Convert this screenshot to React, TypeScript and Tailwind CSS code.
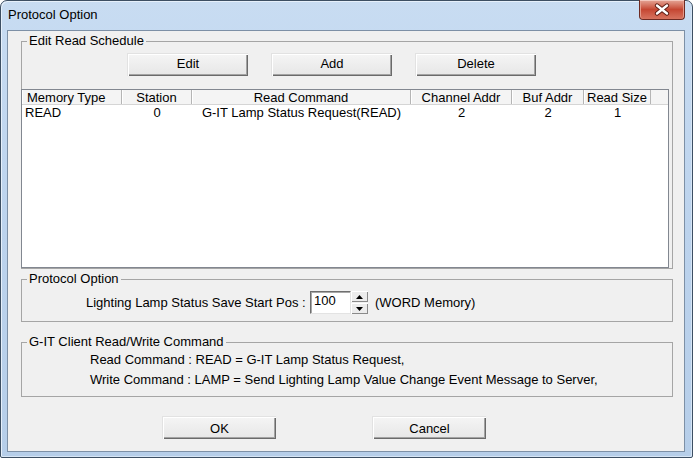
import React from 'react';

const cols = [
  { title: 'Memory Type', w: 'w-[100px]', head: 'justify-start pl-[5px]', cell: 'justify-start pl-[3px]', value: 'READ' },
  { title: 'Station', w: 'w-[70px]', head: 'justify-center', cell: 'justify-center', value: '0' },
  { title: 'Read Command', w: 'w-[219px]', head: 'justify-center', cell: 'justify-center', value: 'G-IT Lamp Status Request(READ)' },
  { title: 'Channel Addr', w: 'w-[101px]', head: 'justify-center', cell: 'justify-center', value: '2' },
  { title: 'Buf Addr', w: 'w-[72px]', head: 'justify-center', cell: 'justify-center', value: '2' },
  { title: 'Read Size', w: 'w-[67px]', head: 'justify-center', cell: 'justify-center', value: '1' },
];

// classic raised push button
function WinButton({ label, className }: { label: string; className: string }) {
  return (
    <button
      type="button"
      className={`${className} h-[23px] flex items-center justify-center bg-linear-to-b from-[#f5f5f5] to-[#e6e6e6] border-t border-l border-[#e2e2e2] shadow-[inset_1px_1px_0_#ffffff,inset_-1px_-1px_0_#6a6a6a,inset_-2px_-2px_0_#a3a3a3] text-[13px] leading-[15px] text-black`}
    >
      {label}
    </button>
  );
}

function SpinArrow({ up }: { up: boolean }) {
  return (
    <div className="flex-1 flex items-center justify-center bg-[#ececec] shadow-[inset_1px_1px_0_#ffffff,inset_-1px_-1px_0_#8a8a8a]">
      <svg width="7" height="4" viewBox="0 0 7 4">
        {up ? <path d="M3.5 0 L7 4 L0 4 Z" fill="#000" /> : <path d="M0 0 L7 0 L3.5 4 Z" fill="#000" />}
      </svg>
    </div>
  );
}

function CloseButton() {
  return (
    <div className="absolute right-0 -top-px w-[46px] h-[20px] rounded-b-[4px] border border-[#6e2a22] border-t-0 bg-linear-to-b from-[#e4a597] via-[#c54632] to-[#d7735f] shadow-[inset_0_1px_0_#f3c7bd,inset_1px_0_0_#e59a8a,inset_-1px_0_0_#e59a8a] flex items-center justify-center">
      <svg width="16" height="13" viewBox="0 0 16 13">
        <path d="M3 2.5 L13 10.5 M13 2.5 L3 10.5" stroke="#5a1a12" strokeWidth="4.2" strokeLinecap="round" />
        <path d="M3 2.5 L13 10.5 M13 2.5 L3 10.5" stroke="#ffffff" strokeWidth="2.4" strokeLinecap="round" />
      </svg>
    </div>
  );
}

export default function App() {
  return (
    <div className="w-[693px] h-[458px] bg-white font-['Liberation_Sans',Arial,sans-serif] text-black">
      <div className="w-full h-full flex flex-col rounded-t-[7px] rounded-b-[2px] border border-[#3d4f63] bg-linear-to-b from-[#c8dcf2] via-[#bcd3ed] to-[#b6cee9] pl-[6px] pr-[7px] shadow-[inset_1px_1px_0_#e6f0fb,inset_-1px_-1px_0_#d6e5f5]">
        {/* title bar */}
        <div className="relative h-[29px] shrink-0">
          <div className="pl-[1px] pt-[6px] text-[13px] leading-[15px]">Protocol Option</div>
          <CloseButton />
        </div>

        {/* client area */}
        <div className="h-[422px] shrink-0 border border-[#7d90a6] bg-[#f0f0f0] flex flex-col">
          <fieldset className="mt-[3px] ml-[13px] w-[652px] border border-[#a5a5a5] p-0 min-w-0">
            <legend className="ml-[5px] px-[2px] text-[13px] leading-[14px]">Edit Read Schedule</legend>
            <div className="mt-[5px] pl-[105px] flex gap-[23px]">
              <WinButton label="Edit" className="w-[121px] pb-[3px]" />
              <WinButton label="Add" className="w-[121px] pb-[3px]" />
              <WinButton label="Delete" className="w-[121px] pb-[3px]" />
            </div>
            <div className="mt-[13px] -ml-px w-[648px] h-[179px] border border-[#828790] bg-white flex flex-col">
              <div className="h-[15px] flex bg-[#f4f4f4] border-b border-[#d5d5d5]">
                {cols.map((c) => (
                  <div
                    key={c.title}
                    className={`${c.w} ${c.head} flex items-center border-r border-[#b5b5b5] text-[13px] leading-[15px] whitespace-nowrap shadow-[inset_1px_0_0_#ffffff]`}
                  >
                    {c.title}
                  </div>
                ))}
                <div className="flex-1" />
              </div>
              <div className="h-[15px] flex">
                {cols.map((c) => (
                  <div key={c.title} className={`${c.w} ${c.cell} flex items-center text-[13px] leading-[15px] whitespace-nowrap`}>
                    {c.value}
                  </div>
                ))}
              </div>
            </div>
          </fieldset>

          <fieldset className="mt-[3px] ml-[13px] w-[652px] border border-[#a5a5a5] p-0 min-w-0">
            <legend className="ml-[5px] px-[2px] text-[13px] leading-[14px]">Protocol Option</legend>
            <div className="mt-[5px] mb-[7px] h-[23px] pl-[64px] flex items-center">
              <div className="w-[224px] text-[13px] leading-[15px] whitespace-nowrap">Lighting Lamp Status Save Start Pos :</div>
              <div className="w-[41px] h-[23px] bg-white border border-t-[#6f6f6f] border-l-[#6f6f6f] border-r-[#e3e3e3] border-b-[#e3e3e3] shadow-[inset_1px_1px_0_#a8a8a8] text-[13px] leading-[15px] pl-[3px] pt-[1px]">
                100
              </div>
              <div className="w-[17px] h-[23px] flex flex-col gap-px">
                <SpinArrow up />
                <SpinArrow up={false} />
              </div>
              <div className="ml-[7px] text-[13px] leading-[15px]">(WORD Memory)</div>
            </div>
          </fieldset>

          <fieldset className="mt-[13px] ml-[13px] w-[652px] border border-[#a5a5a5] p-0 min-w-0">
            <legend className="ml-[5px] px-[2px] text-[13px] leading-[14px]">G-IT Client Read/Write Command</legend>
            <div className="mt-px mb-[6px] pl-[68px] text-[13px] leading-[20px]">
              <div>Read Command : READ = G-IT Lamp Status Request,</div>
              <div>Write Command : LAMP = Send Lighting Lamp Value Change Event Message to Server,</div>
            </div>
          </fieldset>

          <div className="mt-[19px] pl-[154px] flex gap-[96px]">
            <WinButton label="OK" className="w-[114px]" />
            <WinButton label="Cancel" className="w-[114px]" />
          </div>
        </div>
      </div>
    </div>
  );
}
